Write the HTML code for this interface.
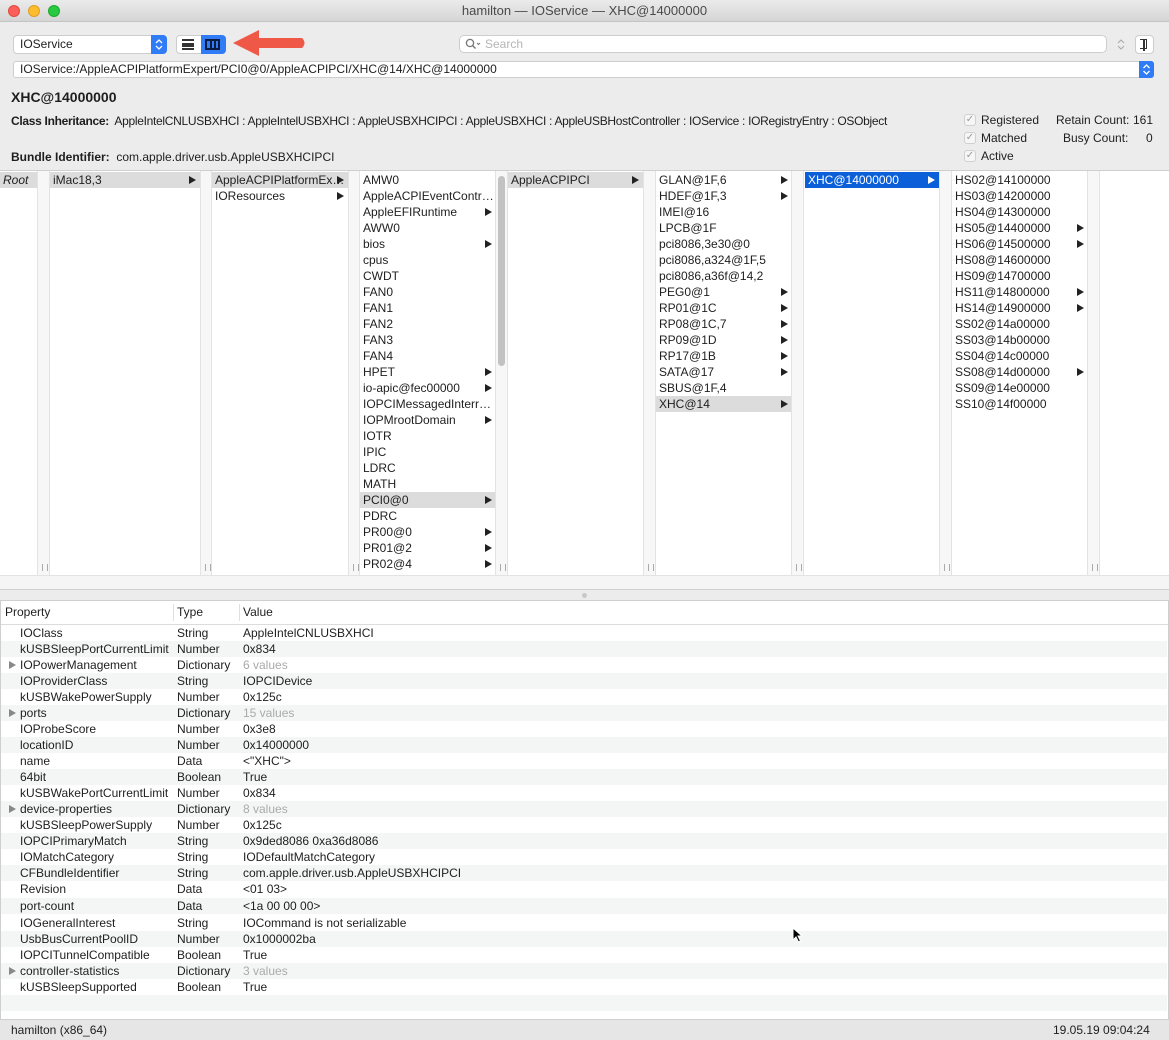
<!DOCTYPE html>
<html><head><meta charset="utf-8">
<style>
*{margin:0;padding:0;box-sizing:border-box}
body{width:1169px;height:1040px;overflow:hidden;background:#ececec;font-family:"Liberation Sans",sans-serif;font-size:12px;color:#1e1e1e;position:relative}
.a{position:absolute}
.title{left:0;top:0;width:1169px;height:22px;background:linear-gradient(#ebebeb,#d5d5d5);border-bottom:1px solid #c4c4c4;text-align:center;line-height:22px;font-size:13px;color:#4a4a4a}
.dot{top:5px;width:12px;height:12px;border-radius:6px}
.box{background:#fff;border:1px solid #cdcdcd;border-radius:4px}
.col{top:171px;height:404px;background:#fff}
.strip{top:171px;height:404px;background:#f7f7f7;border-left:1px solid #e3e3e3;border-right:1px solid #e3e3e3}
.strip::after{content:"";position:absolute;left:4px;bottom:4px;width:4px;height:7px;border-left:1px solid #aaa;border-right:1px solid #aaa}
.it{position:absolute;height:16px;line-height:16px;padding-left:3px;white-space:nowrap}
.it.s{background:#dcdcdc}
.it.b{background:#0b5fd9;color:#fff}
.ar{position:absolute;right:4px;top:4px;width:0;height:0;border-left:7px solid #222;border-top:4px solid transparent;border-bottom:4px solid transparent}
.b .ar{border-left-color:#fff}
.row{position:absolute;left:1px;width:1166px;height:16px;line-height:16px;white-space:nowrap}
.row.g{background:#f4f5f5}
.row span{position:absolute}
.p{left:19px}.t{left:176px}.v{left:242px}
.gr{color:#aaa}
.tri{position:absolute;left:8px;top:4px;border-left:7px solid #888;border-top:4px solid transparent;border-bottom:4px solid transparent}
.chk{width:12px;height:12px;border:1px solid #d0d0d0;border-radius:3px;background:#f6f6f6;font-size:10px;color:#999;line-height:10px;text-align:center}
</style></head><body>
<div class="a title">hamilton — IOService — XHC@14000000</div>
<div class="a dot" style="left:8px;background:#fc5f57;border:1px solid #de4a41"></div>
<div class="a dot" style="left:28px;background:#fdbc2e;border:1px solid #de9f1f"></div>
<div class="a dot" style="left:48px;background:#28c840;border:1px solid #1aaa2c"></div>

<!-- toolbar -->
<div class="a box" style="left:13px;top:35px;width:154px;height:19px;line-height:17px;padding-left:6px;font-size:12px">IOService</div>
<div class="a" style="left:151px;top:35px;width:16px;height:19px;background:#2f7cf6;border-radius:0 4px 4px 0"></div>
<svg class="a" style="left:151px;top:35px" width="16" height="19"><path d="M5 8 L8 5 L11 8 M5 11 L8 14 L11 11" fill="none" stroke="#fff" stroke-width="1.3"/></svg>
<div class="a box" style="left:176px;top:35px;width:50px;height:19px"></div>
<div class="a" style="left:182px;top:39px;width:12px;height:11px;border-top:2px solid #333;border-bottom:2px solid #333"><div style="margin-top:2px;border-top:2px solid #333;height:3px;border-bottom:2px solid #333"></div></div>
<div class="a" style="left:201px;top:35px;width:25px;height:19px;background:#2f7cf6;border-radius:0 4px 4px 0"></div>
<div class="a" style="left:205px;top:39px;width:15px;height:11px;border:2px solid #0a1a40;background:linear-gradient(90deg,transparent 3px,#0a1a40 3px,#0a1a40 5px,transparent 5px,transparent 7px,#0a1a40 7px,#0a1a40 9px,transparent 9px)"></div>
<svg class="a" style="left:228px;top:27px" width="82" height="34"><path d="M5 16 L31 3 L31 11 L74 11 Q79 16 74 21 L31 21 L31 29 Z" fill="#ef5847"/></svg>
<div class="a box" style="left:459px;top:35px;width:648px;height:18px;border-radius:5px;color:#b5b5b5;line-height:16px;padding-left:25px">Search</div>
<svg class="a" style="left:465px;top:38px" width="16" height="12"><circle cx="5" cy="5" r="3.6" fill="none" stroke="#777" stroke-width="1.3"/><path d="M7.5 7.5 L10.5 10.5" stroke="#777" stroke-width="1.4"/><path d="M12 5 L13.5 6.5 L15 5" fill="none" stroke="#777"/></svg>
<svg class="a" style="left:1115px;top:35px" width="12" height="19"><path d="M3 8 L6 5 L9 8 M3 11 L6 14 L9 11" fill="none" stroke="#aaa" stroke-width="1.1"/></svg>
<div class="a box" style="left:1135px;top:35px;width:19px;height:19px"></div>
<div class="a" style="left:1140px;top:39px;width:7px;height:10px;border:1.5px solid #333;border-left:none"></div>
<div class="a" style="left:1143px;top:39px;width:1.5px;height:12px;background:#333"></div>
<div class="a box" style="left:13px;top:61px;width:1141px;height:17px;line-height:15px;padding-left:6px;border-radius:3px">IOService:/AppleACPIPlatformExpert/PCI0@0/AppleACPIPCI/XHC@14/XHC@14000000</div>
<div class="a" style="left:1139px;top:61px;width:15px;height:17px;background:#2f7cf6;border-radius:0 3px 3px 0"></div>
<svg class="a" style="left:1139px;top:61px" width="15" height="17"><path d="M4.5 7 L7.5 4 L10.5 7 M4.5 10 L7.5 13 L10.5 10" fill="none" stroke="#fff" stroke-width="1.3"/></svg>

<div class="a" style="left:11px;top:89px;font-size:14px;font-weight:bold">XHC@14000000</div>
<div class="a" style="left:11px;top:114px;white-space:nowrap;letter-spacing:-0.3px"><b>Class Inheritance:</b>&nbsp; AppleIntelCNLUSBXHCI : AppleIntelUSBXHCI : AppleUSBXHCIPCI : AppleUSBXHCI : AppleUSBHostController : IOService : IORegistryEntry : OSObject</div>
<div class="a" style="left:11px;top:150px;white-space:nowrap"><b>Bundle Identifier:</b>&nbsp; com.apple.driver.usb.AppleUSBXHCIPCI</div>
<div class="a chk" style="left:964px;top:114px">✓</div><div class="a" style="left:981px;top:113px">Registered</div>
<div class="a chk" style="left:964px;top:132px">✓</div><div class="a" style="left:981px;top:131px">Matched</div>
<div class="a chk" style="left:964px;top:150px">✓</div><div class="a" style="left:981px;top:149px">Active</div>
<div class="a" style="left:1056px;top:113px">Retain Count:</div><div class="a" style="left:1133px;top:113px">161</div>
<div class="a" style="left:1063px;top:131px">Busy Count:</div><div class="a" style="left:1146px;top:131px">0</div>

<!-- browser -->
<div class="a" style="left:0;top:170px;width:1169px;height:420px;background:#fff;border-top:1px solid #cfcfcf;border-bottom:1px solid #cfcfcf"></div>
<div class="a col" style="left:0;width:37px"><div class="it s" style="top:1px;width:37px;font-style:italic">Root</div></div>
<div class="a strip" style="left:37px;width:13px"></div>
<div class="a col" style="left:50px;width:150px"><div class="it s" style="top:1px;width:150px">iMac18,3<i class="ar"></i></div></div>
<div class="a strip" style="left:200px;width:12px"></div>
<div class="a col" style="left:212px;width:136px">
<div class="it s" style="top:1px;width:136px">AppleACPIPlatformEx…<i class="ar"></i></div>
<div class="it" style="top:17px;width:136px">IOResources<i class="ar"></i></div></div>
<div class="a strip" style="left:348px;width:12px"></div>
<div class="a col" style="left:360px;width:136px">
<div class="it" style="top:1px;width:136px">AMW0</div>
<div class="it" style="top:17px;width:136px">AppleACPIEventContr…</div>
<div class="it" style="top:33px;width:136px">AppleEFIRuntime<i class="ar"></i></div>
<div class="it" style="top:49px;width:136px">AWW0</div>
<div class="it" style="top:65px;width:136px">bios<i class="ar"></i></div>
<div class="it" style="top:81px;width:136px">cpus</div>
<div class="it" style="top:97px;width:136px">CWDT</div>
<div class="it" style="top:113px;width:136px">FAN0</div>
<div class="it" style="top:129px;width:136px">FAN1</div>
<div class="it" style="top:145px;width:136px">FAN2</div>
<div class="it" style="top:161px;width:136px">FAN3</div>
<div class="it" style="top:177px;width:136px">FAN4</div>
<div class="it" style="top:193px;width:136px">HPET<i class="ar"></i></div>
<div class="it" style="top:209px;width:136px">io-apic@fec00000<i class="ar"></i></div>
<div class="it" style="top:225px;width:136px">IOPCIMessagedInterr…</div>
<div class="it" style="top:241px;width:136px">IOPMrootDomain<i class="ar"></i></div>
<div class="it" style="top:257px;width:136px">IOTR</div>
<div class="it" style="top:273px;width:136px">IPIC</div>
<div class="it" style="top:289px;width:136px">LDRC</div>
<div class="it" style="top:305px;width:136px">MATH</div>
<div class="it s" style="top:321px;width:136px">PCI0@0<i class="ar"></i></div>
<div class="it" style="top:337px;width:136px">PDRC</div>
<div class="it" style="top:353px;width:136px">PR00@0<i class="ar"></i></div>
<div class="it" style="top:369px;width:136px">PR01@2<i class="ar"></i></div>
<div class="it" style="top:385px;width:136px">PR02@4<i class="ar"></i></div>
</div>
<div class="a strip" style="left:495px;width:13px"></div>
<div class="a" style="left:498px;top:176px;width:7px;height:190px;background:#c2c2c2;border-radius:4px"></div>
<div class="a col" style="left:508px;width:135px"><div class="it s" style="top:1px;width:135px">AppleACPIPCI<i class="ar"></i></div></div>
<div class="a strip" style="left:643px;width:13px"></div>
<div class="a col" style="left:656px;width:136px">
<div class="it" style="top:1px;width:136px">GLAN@1F,6<i class="ar"></i></div>
<div class="it" style="top:17px;width:136px">HDEF@1F,3<i class="ar"></i></div>
<div class="it" style="top:33px;width:136px">IMEI@16</div>
<div class="it" style="top:49px;width:136px">LPCB@1F</div>
<div class="it" style="top:65px;width:136px">pci8086,3e30@0</div>
<div class="it" style="top:81px;width:136px">pci8086,a324@1F,5</div>
<div class="it" style="top:97px;width:136px">pci8086,a36f@14,2</div>
<div class="it" style="top:113px;width:136px">PEG0@1<i class="ar"></i></div>
<div class="it" style="top:129px;width:136px">RP01@1C<i class="ar"></i></div>
<div class="it" style="top:145px;width:136px">RP08@1C,7<i class="ar"></i></div>
<div class="it" style="top:161px;width:136px">RP09@1D<i class="ar"></i></div>
<div class="it" style="top:177px;width:136px">RP17@1B<i class="ar"></i></div>
<div class="it" style="top:193px;width:136px">SATA@17<i class="ar"></i></div>
<div class="it" style="top:209px;width:136px">SBUS@1F,4</div>
<div class="it s" style="top:225px;width:136px">XHC@14<i class="ar"></i></div>
</div>
<div class="a strip" style="left:791px;width:13px"></div>
<div class="a col" style="left:804px;width:136px"><div class="it b" style="top:1px;left:1px;width:134px">XHC@14000000<i class="ar"></i></div></div>
<div class="a strip" style="left:939px;width:13px"></div>
<div class="a col" style="left:952px;width:136px">
<div class="it" style="top:1px;width:136px">HS02@14100000</div>
<div class="it" style="top:17px;width:136px">HS03@14200000</div>
<div class="it" style="top:33px;width:136px">HS04@14300000</div>
<div class="it" style="top:49px;width:136px">HS05@14400000<i class="ar"></i></div>
<div class="it" style="top:65px;width:136px">HS06@14500000<i class="ar"></i></div>
<div class="it" style="top:81px;width:136px">HS08@14600000</div>
<div class="it" style="top:97px;width:136px">HS09@14700000</div>
<div class="it" style="top:113px;width:136px">HS11@14800000<i class="ar"></i></div>
<div class="it" style="top:129px;width:136px">HS14@14900000<i class="ar"></i></div>
<div class="it" style="top:145px;width:136px">SS02@14a00000</div>
<div class="it" style="top:161px;width:136px">SS03@14b00000</div>
<div class="it" style="top:177px;width:136px">SS04@14c00000</div>
<div class="it" style="top:193px;width:136px">SS08@14d00000<i class="ar"></i></div>
<div class="it" style="top:209px;width:136px">SS09@14e00000</div>
<div class="it" style="top:225px;width:136px">SS10@14f00000</div>
</div>
<div class="a strip" style="left:1087px;width:13px"></div>
<div class="a" style="left:0;top:575px;width:1169px;height:14px;background:#f5f5f5;border-top:1px solid #e3e3e3"></div>
<div class="a" style="left:582px;top:593px;width:5px;height:5px;border-radius:3px;background:#c8c8c8"></div>

<!-- table -->
<div class="a" style="left:0;top:600px;width:1169px;height:419px;background:#fff;border-top:1px solid #cfcfcf;border-left:1px solid #cfcfcf;border-right:1px solid #cfcfcf"></div>
<div class="a" style="left:1px;top:601px;width:1167px;height:24px;border-bottom:1px solid #dcdcdc;line-height:22px">
<span class="a" style="left:4px">Property</span><span class="a" style="left:172px;top:3px;width:1px;height:17px;background:#e0e0e0"></span>
<span class="a" style="left:176px">Type</span><span class="a" style="left:238px;top:3px;width:1px;height:17px;background:#e0e0e0"></span>
<span class="a" style="left:242px">Value</span></div>
<div class="row" style="top:625px"><span class="p">IOClass</span><span class="t">String</span><span class="v">AppleIntelCNLUSBXHCI</span></div>
<div class="row g" style="top:641px"><span class="p">kUSBSleepPortCurrentLimit</span><span class="t">Number</span><span class="v">0x834</span></div>
<div class="row" style="top:657px"><i class="tri"></i><span class="p">IOPowerManagement</span><span class="t">Dictionary</span><span class="v gr">6 values</span></div>
<div class="row g" style="top:673px"><span class="p">IOProviderClass</span><span class="t">String</span><span class="v">IOPCIDevice</span></div>
<div class="row" style="top:689px"><span class="p">kUSBWakePowerSupply</span><span class="t">Number</span><span class="v">0x125c</span></div>
<div class="row g" style="top:705px"><i class="tri"></i><span class="p">ports</span><span class="t">Dictionary</span><span class="v gr">15 values</span></div>
<div class="row" style="top:721px"><span class="p">IOProbeScore</span><span class="t">Number</span><span class="v">0x3e8</span></div>
<div class="row g" style="top:737px"><span class="p">locationID</span><span class="t">Number</span><span class="v">0x14000000</span></div>
<div class="row" style="top:753px"><span class="p">name</span><span class="t">Data</span><span class="v">&lt;"XHC"&gt;</span></div>
<div class="row g" style="top:769px"><span class="p">64bit</span><span class="t">Boolean</span><span class="v">True</span></div>
<div class="row" style="top:785px"><span class="p">kUSBWakePortCurrentLimit</span><span class="t">Number</span><span class="v">0x834</span></div>
<div class="row g" style="top:801px"><i class="tri"></i><span class="p">device-properties</span><span class="t">Dictionary</span><span class="v gr">8 values</span></div>
<div class="row" style="top:817px"><span class="p">kUSBSleepPowerSupply</span><span class="t">Number</span><span class="v">0x125c</span></div>
<div class="row g" style="top:833px"><span class="p">IOPCIPrimaryMatch</span><span class="t">String</span><span class="v">0x9ded8086 0xa36d8086</span></div>
<div class="row" style="top:849px"><span class="p">IOMatchCategory</span><span class="t">String</span><span class="v">IODefaultMatchCategory</span></div>
<div class="row g" style="top:865px"><span class="p">CFBundleIdentifier</span><span class="t">String</span><span class="v">com.apple.driver.usb.AppleUSBXHCIPCI</span></div>
<div class="row" style="top:881px"><span class="p">Revision</span><span class="t">Data</span><span class="v">&lt;01 03&gt;</span></div>
<div class="row g" style="top:898px"><span class="p">port-count</span><span class="t">Data</span><span class="v">&lt;1a 00 00 00&gt;</span></div>
<div class="row" style="top:915px"><span class="p">IOGeneralInterest</span><span class="t">String</span><span class="v">IOCommand is not serializable</span></div>
<div class="row g" style="top:931px"><span class="p">UsbBusCurrentPoolID</span><span class="t">Number</span><span class="v">0x1000002ba</span></div>
<div class="row" style="top:947px"><span class="p">IOPCITunnelCompatible</span><span class="t">Boolean</span><span class="v">True</span></div>
<div class="row g" style="top:963px"><i class="tri"></i><span class="p">controller-statistics</span><span class="t">Dictionary</span><span class="v gr">3 values</span></div>
<div class="row" style="top:979px"><span class="p">kUSBSleepSupported</span><span class="t">Boolean</span><span class="v">True</span></div>
<div class="row g" style="top:995px"></div>
<svg class="a" style="left:792px;top:927px" width="12" height="16"><path d="M1 1 L1 13 L4 10 L6.5 15 L8.5 14 L6 9 L10 9 Z" fill="#000" stroke="#fff" stroke-width="1"/></svg>

<!-- status -->
<div class="a" style="left:0;top:1019px;width:1169px;height:21px;background:#e6e6e6;border-top:1px solid #cfcfcf"></div>
<div class="a" style="left:11px;top:1023px">hamilton (x86_64)</div>
<div class="a" style="left:1053px;top:1023px">19.05.19 09:04:24</div>
</body></html>
